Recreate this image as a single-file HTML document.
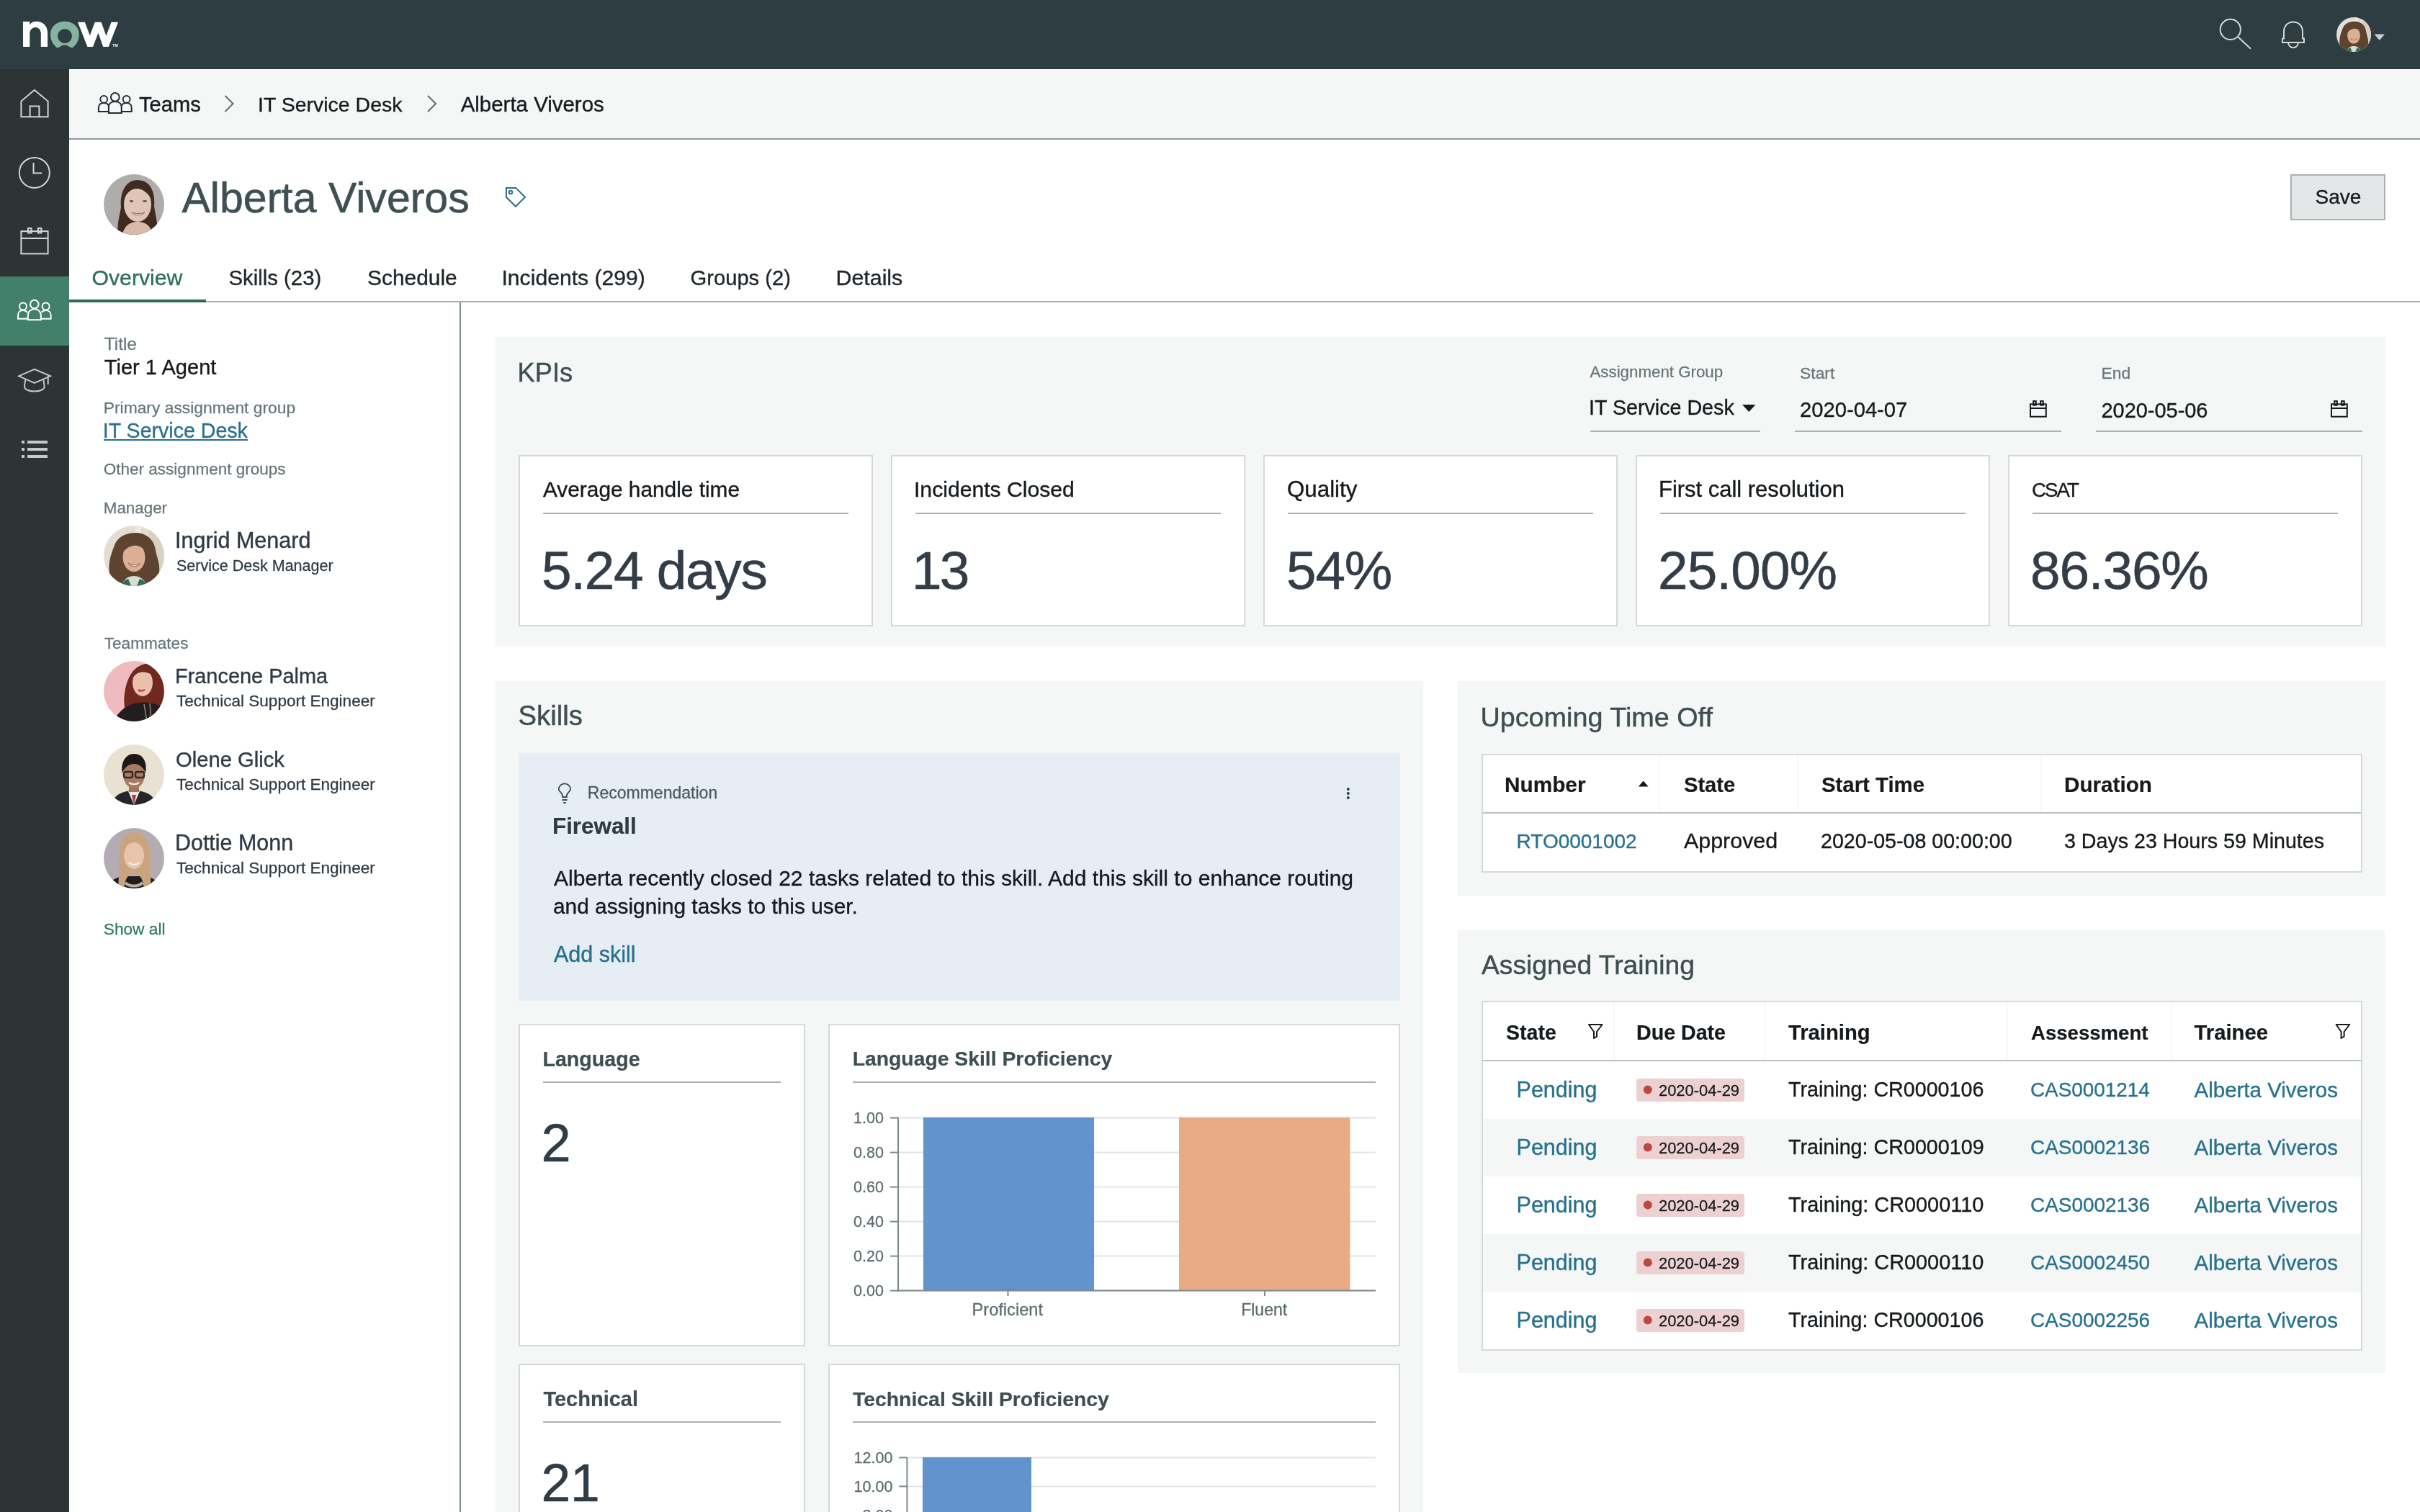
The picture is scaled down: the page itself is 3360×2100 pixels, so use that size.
<!DOCTYPE html><html><head><meta charset="utf-8"><title>Alberta Viveros</title><style>
html,body{margin:0;padding:0;width:3360px;height:2100px;overflow:hidden;background:#fff;position:relative;font-family:"Liberation Sans",sans-serif}
.t{position:absolute;white-space:nowrap;line-height:1;font-family:"Liberation Sans",sans-serif}
.r{position:absolute;box-sizing:border-box}
svg{position:absolute;overflow:visible}
#root{position:absolute;left:0;top:0;width:3360px;height:2100px;will-change:transform}
</style></head><body><div id="root"><div class="r" style="left:0px;top:0px;width:3360px;height:96px;background:#2e3d42;"></div>
<svg style="left:0;top:0" width="200" height="96" viewBox="0 0 200 96">
<path fill="#ffffff" d="M32,65 V30 H41.3 V34.2 C43.6,31.3 46.8,29.8 50.3,29.8 C59.8,29.8 66.1,36.2 66.1,46.2 V65 H56.8 V47 C56.8,41.6 53.9,37.9 49.3,37.9 C44.7,37.9 41.3,41.6 41.3,47 V65 Z"/>
<path fill="#86b3a0" fill-rule="evenodd" d="M70,47.8 C70,36.8 78.9,29.8 89.9,29.8 C100.9,29.8 109.8,36.8 109.8,47.8 C109.8,55.5 106.4,61.6 101.8,65.4 C100.3,66.6 98.6,66.5 97.2,65.5 C95.2,64 92.8,62.5 89.9,62.5 C87,62.5 84.6,64 82.6,65.5 C81.2,66.5 79.5,66.6 78,65.4 C73.4,61.6 70,55.5 70,47.8 Z M90,40.2 A9.9,9.9 0 1 0 90.01,40.2 Z"/>
<polygon fill="#ffffff" points="108,30.65 117.8,30.65 124.8,49.3 131.8,30.65 140.6,30.65 147.4,49.7 154.55,30.65 164.1,30.65 150.7,64.9 143.2,64.9 136.4,45.8 129.1,64.9 121.4,64.9"/>
<text x="156.3" y="65" font-family="Liberation Sans" font-weight="700" font-size="5.2" fill="#fff">TM</text>
</svg>
<svg style="left:3060px;top:10px" width="300" height="80" viewBox="3060 10 300 80">
<circle cx="3096.8" cy="40.9" r="14.1" fill="none" stroke="#d3d8d9" stroke-width="2"/>
<line x1="3107.5" y1="51.5" x2="3125" y2="67.8" stroke="#d3d8d9" stroke-width="2"/>
<path d="M3171,53.5 V44 C3171,35.5 3177,30.5 3184,30.5 C3191,30.5 3197,35.5 3197,44 V53.5 H3199 V59 H3169 V53.5 Z" fill="none" stroke="#d3d8d9" stroke-width="2"/>
<path d="M3177.2,59.5 A6.8,6.8 0 0 0 3190.8,59.5" fill="none" stroke="#d3d8d9" stroke-width="2"/>
<polygon points="3296.5,47.5 3311,47.5 3303.75,56" fill="#c9cfd0"/>
</svg>
<svg style="left:3244px;top:24px" width="48" height="48" viewBox="0 0 84 84"><defs><clipPath id="av324424"><circle cx="42" cy="42" r="42"/></clipPath></defs><g clip-path="url(#av324424)"><rect width="84" height="84" fill="#e4ded2"/>
<rect x="44" y="0" width="8" height="84" fill="#eeeae2"/><rect x="62" y="0" width="22" height="84" fill="#d9d2c3"/>
<path d="M8,66 C6,52 10,40 14,30 C18,16 30,10 44,10 C60,10 70,20 72,34 C74,46 80,56 76,70 C72,80 66,84 60,84 L20,84 C14,82 10,74 8,66 Z" fill="#5e4331"/>
<path d="M24,84 C28,74 34,70 42,70 C50,70 56,74 60,84 Z" fill="#d6ddd2"/>
<path d="M24,84 C26,78 30,75 34,74 L38,84 Z M60,84 C58,78 54,75 50,74 L46,84 Z" fill="#2f6a55"/>
<ellipse cx="42" cy="44" rx="15.5" ry="20" fill="#dcae94"/>
<path d="M26,38 C26,26 33,20 43,20 C53,20 59,26 59,36 C53,29 47,27 41,28 C35,29 29,33 26,38 Z" fill="#5e4331"/>
<path d="M34,52 C38,58 47,58 51,52 C47,55 38,55 34,52 Z" fill="#f6f0e8" stroke="#9a5a50" stroke-width="1"/></g></svg>
<div class="r" style="left:0px;top:96px;width:96px;height:2004px;background:#2d3436;"></div>
<div class="r" style="left:0px;top:384px;width:96px;height:96px;background:#42806c;"></div>
<svg style="left:0;top:96px" width="96" height="600" viewBox="0 96 96 600">
<g fill="none" stroke="#d2d6d6" stroke-width="2">
<path d="M29.4,162.3 V140.6 L47.8,125 L66.6,140.6 V162.3 Z"/>
<path d="M41.6,162.3 V147.6 H54.4 V162.3"/>
<circle cx="47.8" cy="239.9" r="21"/>
<path d="M46.5,226 V240.6 H58"/>
<rect x="29.4" y="321.2" width="37.2" height="31.2"/>
<line x1="29.4" y1="331" x2="66.6" y2="331"/>
<rect x="39" y="317" width="4.5" height="6.5"/>
<rect x="52.9" y="317" width="4.5" height="6.5"/>
</g>
<g fill="none" stroke="#ffffff" stroke-width="2">
<circle cx="47.8" cy="422.6" r="5.8"/>
<path d="M38.8,444.2 V438.5 C38.8,432.5 42.8,429.2 47.8,429.2 C52.8,429.2 56.8,432.5 56.8,438.5 V444.2 Z"/>
<circle cx="32" cy="425.6" r="5"/>
<path d="M38.8,442.8 H25 V437.5 C25,433.5 28,431 32,431 C34.5,431 36.8,432 38,434"/>
<circle cx="63.6" cy="425.6" r="5"/>
<path d="M56.8,442.8 H70.6 V437.5 C70.6,433.5 67.6,431 63.6,431 C61.1,431 58.8,432 57.6,434"/>
</g>
<g fill="none" stroke="#c4c9ca" stroke-width="2">
<polygon points="26,522.3 47.8,512.8 70,522.3 47.8,532"/>
<path d="M35.4,526.6 C35,530 34,534 34,537 C34,541 40,543.5 47.8,543.5 C55.6,543.5 61.6,541 61.6,537 C61.6,534 60.6,530 60.2,526.6"/>
<line x1="66.7" y1="522.5" x2="66.7" y2="534"/>
</g>
<g fill="#c4c9ca">
<rect x="30" y="612" width="4" height="4"/><rect x="38" y="612" width="28" height="4"/>
<rect x="30" y="622" width="4" height="4"/><rect x="38" y="622" width="28" height="4"/>
<rect x="30" y="632" width="4" height="4"/><rect x="38" y="632" width="28" height="4"/>
</g>
</svg>
<div class="r" style="left:96px;top:96px;width:3264px;height:96px;background:#f5f6f6;"></div>
<div class="r" style="left:96px;top:192px;width:3264px;height:2px;background:#8d9a9c;"></div>
<svg style="left:96px;top:96px" width="600" height="96" viewBox="96 96 600 96">
<g fill="none" stroke="#232c36" stroke-width="2">
<circle cx="159.8" cy="134.9" r="5.9"/>
<path d="M150.9,157.1 V148.8 C150.9,143.6 154.8,140.9 159.8,140.9 C164.8,140.9 168.7,143.6 168.7,148.8 V157.1 Z"/>
<circle cx="144.2" cy="137.9" r="4.9"/>
<path d="M150.9,155 H136.9 V149.5 C136.9,145.2 140.2,142.9 144.2,142.9 C147.6,142.9 150.2,144.6 150.9,147"/>
<circle cx="175.6" cy="137.9" r="4.9"/>
<path d="M168.7,155 H182.7 V149.5 C182.7,145.2 179.4,142.9 175.6,142.9 C172,142.9 169.4,144.6 168.7,147"/>
</g>
<g fill="none" stroke="#5f6d70" stroke-width="2">
<polyline points="312.5,133 323.5,144 312.5,155"/>
<polyline points="594,133 605,144 594,155"/>
</g>
</svg>
<span class="t" style="left:193.00px;top:130.91px;font-size:29.19px;font-weight:400;color:#161a1d;-webkit-text-stroke:0.35px #161a1d;">Teams</span>
<span class="t" style="left:358.00px;top:131.26px;font-size:28.49px;font-weight:400;color:#161a1d;-webkit-text-stroke:0.34px #161a1d;">IT Service Desk</span>
<span class="t" style="left:639.70px;top:130.27px;font-size:29.45px;font-weight:400;color:#161a1d;-webkit-text-stroke:0.35px #161a1d;">Alberta Viveros</span>
<svg style="left:144px;top:242px" width="84" height="84" viewBox="0 0 84 84"><defs><clipPath id="av144242"><circle cx="42" cy="42" r="42"/></clipPath></defs><g clip-path="url(#av144242)"><rect width="84" height="84" fill="#adaeab"/>
<path d="M20,84 C18,70 22,58 24,46 C22,26 30,8 47,8 C64,8 72,24 70,44 C72,58 76,70 74,84 Z" fill="#3f2b20"/>
<path d="M26,84 C28,72 36,66 47,66 C58,66 66,72 68,84 Z" fill="#d8bca9"/>
<ellipse cx="47" cy="42" rx="19" ry="24" fill="#dfc5b6"/>
<path d="M28,34 C30,20 38,14 48,14 C58,14 66,22 66,34 C60,24 52,20 46,20 C38,20 32,26 28,34 Z" fill="#3f2b20"/>
<ellipse cx="38.5" cy="37.5" rx="3" ry="1.4" fill="#6b5550"/><ellipse cx="57" cy="37.5" rx="3" ry="1.4" fill="#6b5550"/>
<path d="M39,53 C43,58 53,58 57,53 C52,55 44,55 39,53 Z" fill="#f3ece6" stroke="#8d5d55" stroke-width="1"/></g></svg>
<span class="t" style="left:252.50px;top:246.48px;font-size:59.04px;font-weight:400;color:#3f5053;-webkit-text-stroke:0.6px #3f5053;">Alberta Viveros</span>
<svg style="left:690px;top:250px" width="50" height="45" viewBox="690 250 50 45">
<g fill="none" stroke="#2b6f86" stroke-width="2"><polygon points="702.9,260.9 716.2,260.9 729,273.8 716,286.8 702.9,273.8"/>
<circle cx="709" cy="267" r="2.3"/></g></svg>
<div class="r" style="left:3180px;top:242px;width:132px;height:64px;background:#e4e6e8;border:2px solid #a9b1b4;"></div>
<span class="t" style="left:3214.50px;top:260.47px;font-size:28.05px;font-weight:400;color:#161a1d;-webkit-text-stroke:0.34px #161a1d;">Save</span>
<div class="r" style="left:96px;top:418px;width:3264px;height:2px;background:#a9afb2;"></div>
<div class="r" style="left:96px;top:416px;width:190px;height:4px;background:#2e6b57;"></div>
<span class="t" style="left:127.50px;top:370.89px;font-size:30.23px;font-weight:400;color:#2d6f58;-webkit-text-stroke:0.36px #2d6f58;">Overview</span>
<span class="t" style="left:317.50px;top:371.34px;font-size:29.33px;font-weight:400;color:#1f2528;-webkit-text-stroke:0.35px #1f2528;">Skills (23)</span>
<span class="t" style="left:510.00px;top:371.04px;font-size:29.92px;font-weight:400;color:#1f2528;-webkit-text-stroke:0.36px #1f2528;">Schedule</span>
<span class="t" style="left:696.50px;top:370.93px;font-size:30.13px;font-weight:400;color:#1f2528;-webkit-text-stroke:0.36px #1f2528;">Incidents (299)</span>
<span class="t" style="left:958.50px;top:371.91px;font-size:29.19px;font-weight:400;color:#1f2528;-webkit-text-stroke:0.35px #1f2528;">Groups (2)</span>
<span class="t" style="left:1160.50px;top:370.81px;font-size:30.37px;font-weight:400;color:#1f2528;-webkit-text-stroke:0.36px #1f2528;">Details</span>
<div class="r" style="left:638px;top:420px;width:2px;height:1680px;background:#808b8d;"></div>
<span class="t" style="left:144.75px;top:465.57px;font-size:24.36px;font-weight:400;color:#677679;-webkit-text-stroke:0.29px #677679;">Title</span>
<span class="t" style="left:144.75px;top:495.97px;font-size:29.07px;font-weight:400;color:#161a1d;-webkit-text-stroke:0.35px #161a1d;">Tier 1 Agent</span>
<span class="t" style="left:143.75px;top:554.84px;font-size:22.83px;font-weight:400;color:#677679;-webkit-text-stroke:0.27px #677679;">Primary assignment group</span>
<span class="t" style="left:142.75px;top:583.70px;font-size:28.59px;font-weight:400;color:#27718e;-webkit-text-stroke:0.34px #27718e;">IT Service Desk</span>
<div class="r" style="left:144px;top:610px;width:200px;height:2px;background:#27718e;"></div>
<span class="t" style="left:143.75px;top:641.24px;font-size:22.52px;font-weight:400;color:#677679;-webkit-text-stroke:0.27px #677679;">Other assignment groups</span>
<span class="t" style="left:143.75px;top:695.31px;font-size:22.38px;font-weight:400;color:#677679;-webkit-text-stroke:0.27px #677679;">Manager</span>
<svg style="left:144px;top:730px" width="84" height="84" viewBox="0 0 84 84"><defs><clipPath id="av144730"><circle cx="42" cy="42" r="42"/></clipPath></defs><g clip-path="url(#av144730)"><rect width="84" height="84" fill="#e4ded2"/>
<rect x="44" y="0" width="8" height="84" fill="#eeeae2"/><rect x="62" y="0" width="22" height="84" fill="#d9d2c3"/>
<path d="M8,66 C6,52 10,40 14,30 C18,16 30,10 44,10 C60,10 70,20 72,34 C74,46 80,56 76,70 C72,80 66,84 60,84 L20,84 C14,82 10,74 8,66 Z" fill="#5e4331"/>
<path d="M24,84 C28,74 34,70 42,70 C50,70 56,74 60,84 Z" fill="#d6ddd2"/>
<path d="M24,84 C26,78 30,75 34,74 L38,84 Z M60,84 C58,78 54,75 50,74 L46,84 Z" fill="#2f6a55"/>
<ellipse cx="42" cy="44" rx="15.5" ry="20" fill="#dcae94"/>
<path d="M26,38 C26,26 33,20 43,20 C53,20 59,26 59,36 C53,29 47,27 41,28 C35,29 29,33 26,38 Z" fill="#5e4331"/>
<path d="M34,52 C38,58 47,58 51,52 C47,55 38,55 34,52 Z" fill="#f6f0e8" stroke="#9a5a50" stroke-width="1"/></g></svg>
<span class="t" style="left:243.00px;top:734.73px;font-size:30.55px;font-weight:400;color:#2e3943;-webkit-text-stroke:0.37px #2e3943;">Ingrid Menard</span>
<span class="t" style="left:245.00px;top:775.99px;font-size:21.52px;font-weight:400;color:#2e3943;-webkit-text-stroke:0.26px #2e3943;">Service Desk Manager</span>
<span class="t" style="left:144.75px;top:883.41px;font-size:22.58px;font-weight:400;color:#677679;-webkit-text-stroke:0.27px #677679;">Teammates</span>
<svg style="left:144px;top:918px" width="84" height="84" viewBox="0 0 84 84"><defs><clipPath id="av144918"><circle cx="42" cy="42" r="42"/></clipPath></defs><g clip-path="url(#av144918)"><rect width="84" height="84" fill="#efbbbe"/>
<path d="M30,70 C26,52 30,30 38,18 C44,8 56,2 68,4 C80,8 84,24 84,44 L84,84 L28,84 Z" fill="#70291f"/>
<path d="M14,84 C20,70 32,60 48,58 C62,56 76,60 84,66 L84,84 Z" fill="#221e1f"/>
<path d="M56,60 L60,84 M64,59 L66,84" stroke="#8d8a88" stroke-width="1.5"/>
<ellipse cx="54" cy="30" rx="14" ry="19" fill="#e8c0ac"/>
<path d="M40,24 C42,12 50,8 58,8 C66,8 70,14 70,22 C64,16 56,14 50,16 C46,17 42,20 40,24 Z" fill="#70291f"/>
<path d="M48,40 C50,42 54,42 57,40" stroke="#c23b55" stroke-width="2.5" fill="none"/></g></svg>
<span class="t" style="left:243.00px;top:925.24px;font-size:28.92px;font-weight:400;color:#2e3943;-webkit-text-stroke:0.35px #2e3943;">Francene Palma</span>
<span class="t" style="left:245.00px;top:962.73px;font-size:22.55px;font-weight:400;color:#2e3943;-webkit-text-stroke:0.27px #2e3943;">Technical Support Engineer</span>
<svg style="left:144px;top:1034px" width="84" height="84" viewBox="0 0 84 84"><defs><clipPath id="av1441034"><circle cx="42" cy="42" r="42"/></clipPath></defs><g clip-path="url(#av1441034)"><rect width="84" height="84" fill="#e9e1d1"/>
<path d="M10,84 C14,70 26,64 42,64 C58,64 70,70 74,84 Z" fill="#24262c"/>
<path d="M34,65 L42,84 L50,65 Z" fill="#ebe6df"/>
<path d="M39,70 L42,84 L45,70 Z" fill="#b83a3a"/>
<rect x="35" y="54" width="14" height="12" fill="#a07458"/>
<ellipse cx="42" cy="42" rx="15" ry="19" fill="#a97b60"/>
<path d="M26,40 C23,26 30,13 42,13 C55,13 61,25 58,40 C55,31 49,27 42,27 C35,27 29,31 26,40 Z" fill="#1d1816"/>
<g fill="none" stroke="#2a2a30" stroke-width="2.4"><rect x="28" y="38" width="12" height="8" rx="2.5"/><rect x="44" y="38" width="12" height="8" rx="2.5"/></g>
<path d="M35,53 C39,56 45,56 49,53" stroke="#f4f0ea" stroke-width="2.2" fill="none"/></g></svg>
<span class="t" style="left:244.00px;top:1041.10px;font-size:29.19px;font-weight:400;color:#2e3943;-webkit-text-stroke:0.35px #2e3943;">Olene Glick</span>
<span class="t" style="left:245.00px;top:1078.73px;font-size:22.55px;font-weight:400;color:#2e3943;-webkit-text-stroke:0.27px #2e3943;">Technical Support Engineer</span>
<svg style="left:144px;top:1150px" width="84" height="84" viewBox="0 0 84 84"><defs><clipPath id="av1441150"><circle cx="42" cy="42" r="42"/></clipPath></defs><g clip-path="url(#av1441150)"><rect width="84" height="84" fill="#b3adb3"/>
<path d="M6,84 C8,72 18,68 28,67 L56,67 C66,68 76,72 78,84 Z" fill="#1f1c1e"/>
<path d="M20,84 C22,62 20,46 22,32 C24,14 32,6 42,6 C54,6 62,14 64,32 C66,46 64,62 66,84 L56,84 C54,72 52,64 42,64 C32,64 30,72 28,84 Z" fill="#c9a47f"/>
<ellipse cx="42" cy="38" rx="14" ry="19" fill="#e7c4ac"/>
<path d="M28,32 C28,18 35,12 42,12 C51,12 57,18 57,30 C51,22 46,20 42,20 C36,20 31,24 28,32 Z" fill="#c9a47f"/>
<path d="M35,48 C39,52 45,52 49,48" stroke="#f5f0eb" stroke-width="2.2" fill="none"/>
<path d="M30,76 C36,82 48,82 54,76" stroke="#b9aea7" stroke-width="4" fill="none"/></g></svg>
<span class="t" style="left:243.00px;top:1155.48px;font-size:30.44px;font-weight:400;color:#2e3943;-webkit-text-stroke:0.37px #2e3943;">Dottie Monn</span>
<span class="t" style="left:245.00px;top:1194.73px;font-size:22.55px;font-weight:400;color:#2e3943;-webkit-text-stroke:0.27px #2e3943;">Technical Support Engineer</span>
<span class="t" style="left:143.75px;top:1278.65px;font-size:22.70px;font-weight:400;color:#307a67;-webkit-text-stroke:0.27px #307a67;">Show all</span>
<div class="r" style="left:688px;top:468px;width:2624px;height:430px;background:#f5f7f6;"></div>
<span class="t" style="left:718.60px;top:499.69px;font-size:36.22px;font-weight:400;color:#3e4e51;-webkit-text-stroke:0.43px #3e4e51;">KPIs</span>
<span class="t" style="left:2207.50px;top:506.34px;font-size:22.31px;font-weight:400;color:#677679;-webkit-text-stroke:0.27px #677679;">Assignment Group</span>
<span class="t" style="left:2499.00px;top:507.05px;font-size:22.90px;font-weight:400;color:#677679;-webkit-text-stroke:0.27px #677679;">Start</span>
<span class="t" style="left:2917.50px;top:507.09px;font-size:22.82px;font-weight:400;color:#677679;-webkit-text-stroke:0.27px #677679;">End</span>
<span class="t" style="left:2206.00px;top:552.17px;font-size:28.67px;font-weight:400;color:#161a1d;-webkit-text-stroke:0.34px #161a1d;">IT Service Desk</span>
<span class="t" style="left:2499.00px;top:555.41px;font-size:29.19px;font-weight:400;color:#161a1d;-webkit-text-stroke:0.35px #161a1d;">2020-04-07</span>
<span class="t" style="left:2917.50px;top:555.53px;font-size:28.93px;font-weight:400;color:#161a1d;-webkit-text-stroke:0.35px #161a1d;">2020-05-06</span>
<div class="r" style="left:2208px;top:598px;width:236px;height:2px;background:#aab2b5;"></div>
<div class="r" style="left:2492px;top:598px;width:370px;height:2px;background:#aab2b5;"></div>
<div class="r" style="left:2910px;top:598px;width:370px;height:2px;background:#aab2b5;"></div>
<svg style="left:2400px;top:540px" width="900" height="60" viewBox="2400 540 900 60">
<polygon points="2419,562 2437.5,562 2428.25,572" fill="#161a1d"/>
<g fill="none" stroke="#161a1d" stroke-width="2">
<rect x="2819" y="561.3" width="21.8" height="17.4"/><line x1="2819" y1="567" x2="2840.8" y2="567"/>
<rect x="2823.2" y="557.1" width="3.6" height="5.6"/><rect x="2833.1" y="557.1" width="3.6" height="5.6"/>
<rect x="3237" y="561.3" width="21.8" height="17.4"/><line x1="3237" y1="567" x2="3258.8" y2="567"/>
<rect x="3241.2" y="557.1" width="3.6" height="5.6"/><rect x="3251.1" y="557.1" width="3.6" height="5.6"/>
</g></svg>
<div class="r" style="left:720px;top:632px;width:492px;height:238px;background:#ffffff;border:2px solid #d5d9da;"></div>
<span class="t" style="left:754.00px;top:665.18px;font-size:29.83px;font-weight:400;color:#161a1d;-webkit-text-stroke:0.36px #161a1d;">Average handle time</span>
<div class="r" style="left:754px;top:712px;width:424px;height:2px;background:#aab1b4;"></div>
<span class="t" style="left:752.00px;top:755.44px;font-size:74.72px;font-weight:400;color:#343d47;-webkit-text-stroke:0.6px #343d47;letter-spacing:-1.282px;">5.24 days</span>
<div class="r" style="left:1237px;top:632px;width:492px;height:238px;background:#ffffff;border:2px solid #d5d9da;"></div>
<span class="t" style="left:1269.00px;top:665.02px;font-size:30.15px;font-weight:400;color:#161a1d;-webkit-text-stroke:0.36px #161a1d;">Incidents Closed</span>
<div class="r" style="left:1271px;top:712px;width:424px;height:2px;background:#aab1b4;"></div>
<span class="t" style="left:1266.00px;top:755.44px;font-size:74.72px;font-weight:400;color:#343d47;-webkit-text-stroke:0.6px #343d47;letter-spacing:-2.755px;">13</span>
<div class="r" style="left:1754px;top:632px;width:492px;height:238px;background:#ffffff;border:2px solid #d5d9da;"></div>
<span class="t" style="left:1787.00px;top:664.44px;font-size:31.31px;font-weight:400;color:#161a1d;-webkit-text-stroke:0.38px #161a1d;">Quality</span>
<div class="r" style="left:1788px;top:712px;width:424px;height:2px;background:#aab1b4;"></div>
<span class="t" style="left:1786.00px;top:755.44px;font-size:74.72px;font-weight:400;color:#343d47;-webkit-text-stroke:0.6px #343d47;letter-spacing:-1.155px;">54%</span>
<div class="r" style="left:2271px;top:632px;width:492px;height:238px;background:#ffffff;border:2px solid #d5d9da;"></div>
<span class="t" style="left:2303.00px;top:664.63px;font-size:30.94px;font-weight:400;color:#161a1d;-webkit-text-stroke:0.37px #161a1d;">First call resolution</span>
<div class="r" style="left:2305px;top:712px;width:424px;height:2px;background:#aab1b4;"></div>
<span class="t" style="left:2302.00px;top:755.44px;font-size:74.72px;font-weight:400;color:#343d47;-webkit-text-stroke:0.6px #343d47;letter-spacing:-0.876px;">25.00%</span>
<div class="r" style="left:2788px;top:632px;width:492px;height:238px;background:#ffffff;border:2px solid #d5d9da;"></div>
<span class="t" style="left:2821.00px;top:667.27px;font-size:27.65px;font-weight:400;color:#161a1d;-webkit-text-stroke:0.33px #161a1d;letter-spacing:-1.927px;">CSAT</span>
<div class="r" style="left:2822px;top:712px;width:424px;height:2px;background:#aab1b4;"></div>
<span class="t" style="left:2819.00px;top:755.44px;font-size:74.72px;font-weight:400;color:#343d47;-webkit-text-stroke:0.6px #343d47;letter-spacing:-1.136px;">86.36%</span>
<div class="r" style="left:688px;top:946px;width:1288px;height:1154px;background:#f5f7f6;"></div>
<span class="t" style="left:719.60px;top:975.39px;font-size:38.22px;font-weight:400;color:#3e4e51;-webkit-text-stroke:0.46px #3e4e51;">Skills</span>
<div class="r" style="left:720px;top:1046px;width:1224px;height:344px;background:#e6edf4;"></div>
<svg style="left:760px;top:1080px" width="1200" height="50" viewBox="760 1080 1200 50">
<path d="M781,1107 V1105.5 C781,1103.2 779.8,1101.8 778.2,1100.2 C776.6,1098.6 775.8,1097.2 775.8,1096.4 A8.1,8.1 0 0 1 792,1096.4 C792,1097.2 791.2,1098.6 789.6,1100.2 C788,1101.8 786.8,1103.2 786.8,1105.5 V1107 Z" fill="none" stroke="#3b4a4c" stroke-width="1.8"/>
<rect x="780.5" y="1110" width="7" height="2" fill="#3b4a4c"/>
<rect x="782.3" y="1114" width="3.5" height="2" fill="#3b4a4c"/>
<circle cx="1871.8" cy="1096" r="2" fill="#2f3a44"/><circle cx="1871.8" cy="1102" r="2" fill="#2f3a44"/><circle cx="1871.8" cy="1108" r="2" fill="#2f3a44"/>
</svg>
<span class="t" style="left:815.80px;top:1090.49px;font-size:23.02px;font-weight:400;color:#4b5a5d;-webkit-text-stroke:0.28px #4b5a5d;">Recommendation</span>
<span class="t" style="left:767.00px;top:1132.42px;font-size:31.37px;font-weight:700;color:#2f3a44;-webkit-text-stroke:0.2px #2f3a44;">Firewall</span>
<span class="t" style="left:769.00px;top:1205.08px;font-size:30.04px;font-weight:400;color:#161a1d;-webkit-text-stroke:0.36px #161a1d;">Alberta recently closed 22 tasks related to this skill. Add this skill to enhance routing</span>
<span class="t" style="left:768.00px;top:1244.39px;font-size:29.83px;font-weight:400;color:#161a1d;-webkit-text-stroke:0.36px #161a1d;">and assigning tasks to this user.</span>
<span class="t" style="left:769.00px;top:1309.75px;font-size:30.51px;font-weight:400;color:#27718e;-webkit-text-stroke:0.37px #27718e;">Add skill</span>
<div class="r" style="left:720px;top:1422px;width:398px;height:448px;background:#ffffff;border:2px solid #d5d9da;"></div>
<span class="t" style="left:753.40px;top:1456.68px;font-size:28.64px;font-weight:700;color:#3e4e51;-webkit-text-stroke:0.2px #3e4e51;">Language</span>
<div class="r" style="left:754px;top:1501.5px;width:330px;height:2.0px;background:#a9b1b4;"></div>
<span class="t" style="left:751.40px;top:1551.29px;font-size:74.02px;font-weight:400;color:#303c47;-webkit-text-stroke:0.6px #303c47;letter-spacing:1.700px;">2</span>
<div class="r" style="left:720px;top:1894px;width:398px;height:246px;background:#ffffff;border:2px solid #d5d9da;"></div>
<span class="t" style="left:754.40px;top:1928.50px;font-size:29.01px;font-weight:700;color:#3e4e51;-webkit-text-stroke:0.2px #3e4e51;">Technical</span>
<div class="r" style="left:754px;top:1973.5px;width:330px;height:2.0px;background:#a9b1b4;"></div>
<span class="t" style="left:751.40px;top:2024.21px;font-size:73.18px;font-weight:400;color:#303c47;-webkit-text-stroke:0.6px #303c47;letter-spacing:0.005px;">21</span>
<div class="r" style="left:1150px;top:1422px;width:794px;height:448px;background:#ffffff;border:2px solid #d5d9da;"></div>
<span class="t" style="left:1183.70px;top:1455.63px;font-size:28.33px;font-weight:700;color:#3e4e51;-webkit-text-stroke:0.2px #3e4e51;">Language Skill Proficiency</span>
<div class="r" style="left:1184px;top:1501.5px;width:726px;height:2.0px;background:#a9b1b4;"></div>
<div class="r" style="left:1150px;top:1894px;width:794px;height:246px;background:#ffffff;border:2px solid #d5d9da;"></div>
<span class="t" style="left:1184.00px;top:1928.51px;font-size:28.38px;font-weight:700;color:#3e4e51;-webkit-text-stroke:0.2px #3e4e51;">Technical Skill Proficiency</span>
<div class="r" style="left:1184px;top:1973.5px;width:726px;height:2.0px;background:#a9b1b4;"></div>
<svg style="left:1150px;top:1500px" width="800" height="400" viewBox="1150 1500 800 400"><line x1="1247" y1="1552.6" x2="1910" y2="1552.6" stroke="#e1e4e5" stroke-width="2"/><line x1="1236" y1="1552.6" x2="1247" y2="1552.6" stroke="#7d8a8d" stroke-width="2"/><line x1="1247" y1="1600.6" x2="1910" y2="1600.6" stroke="#e1e4e5" stroke-width="2"/><line x1="1236" y1="1600.6" x2="1247" y2="1600.6" stroke="#7d8a8d" stroke-width="2"/><line x1="1247" y1="1648.6" x2="1910" y2="1648.6" stroke="#e1e4e5" stroke-width="2"/><line x1="1236" y1="1648.6" x2="1247" y2="1648.6" stroke="#7d8a8d" stroke-width="2"/><line x1="1247" y1="1696.6" x2="1910" y2="1696.6" stroke="#e1e4e5" stroke-width="2"/><line x1="1236" y1="1696.6" x2="1247" y2="1696.6" stroke="#7d8a8d" stroke-width="2"/><line x1="1247" y1="1744.6" x2="1910" y2="1744.6" stroke="#e1e4e5" stroke-width="2"/><line x1="1236" y1="1744.6" x2="1247" y2="1744.6" stroke="#7d8a8d" stroke-width="2"/><line x1="1247" y1="1792.6" x2="1910" y2="1792.6" stroke="#e1e4e5" stroke-width="2"/><line x1="1236" y1="1792.6" x2="1247" y2="1792.6" stroke="#7d8a8d" stroke-width="2"/><rect x="1282" y="1552" width="237" height="241" fill="#6194cc"/><rect x="1637" y="1552" width="237.4" height="241" fill="#e8ab84"/><line x1="1247" y1="1552" x2="1247" y2="1793.6" stroke="#7d8a8d" stroke-width="2"/><line x1="1246" y1="1792.6" x2="1910" y2="1792.6" stroke="#7d8a8d" stroke-width="2"/><line x1="1399.5" y1="1792.6" x2="1399.5" y2="1800" stroke="#7d8a8d" stroke-width="2"/><line x1="1756" y1="1792.6" x2="1756" y2="1800" stroke="#7d8a8d" stroke-width="2"/></svg>
<span class="t" style="left:1185.11px;top:1543.05px;font-size:21.50px;font-weight:400;color:#5c6b6e;-webkit-text-stroke:0.26px #5c6b6e;">1.00</span>
<span class="t" style="left:1185.11px;top:1591.05px;font-size:21.50px;font-weight:400;color:#5c6b6e;-webkit-text-stroke:0.26px #5c6b6e;">0.80</span>
<span class="t" style="left:1185.11px;top:1639.05px;font-size:21.50px;font-weight:400;color:#5c6b6e;-webkit-text-stroke:0.26px #5c6b6e;">0.60</span>
<span class="t" style="left:1185.11px;top:1687.05px;font-size:21.50px;font-weight:400;color:#5c6b6e;-webkit-text-stroke:0.26px #5c6b6e;">0.40</span>
<span class="t" style="left:1185.11px;top:1735.05px;font-size:21.50px;font-weight:400;color:#5c6b6e;-webkit-text-stroke:0.26px #5c6b6e;">0.20</span>
<span class="t" style="left:1185.11px;top:1783.05px;font-size:21.50px;font-weight:400;color:#5c6b6e;-webkit-text-stroke:0.26px #5c6b6e;">0.00</span>
<span class="t" style="left:1349.54px;top:1807.88px;font-size:23.64px;font-weight:400;color:#5c6b6e;-webkit-text-stroke:0.28px #5c6b6e;">Proficient</span>
<span class="t" style="left:1723.17px;top:1808.17px;font-size:23.06px;font-weight:400;color:#5c6b6e;-webkit-text-stroke:0.28px #5c6b6e;">Fluent</span>
<svg style="left:1150px;top:2000px" width="800" height="100" viewBox="1150 2000 800 100"><line x1="1259.4" y1="2024.4" x2="1910" y2="2024.4" stroke="#e1e4e5" stroke-width="2"/><line x1="1248" y1="2024.4" x2="1259.4" y2="2024.4" stroke="#7d8a8d" stroke-width="2"/><line x1="1259.4" y1="2064.4" x2="1910" y2="2064.4" stroke="#e1e4e5" stroke-width="2"/><line x1="1248" y1="2064.4" x2="1259.4" y2="2064.4" stroke="#7d8a8d" stroke-width="2"/><line x1="1259.4" y1="2104.4" x2="1910" y2="2104.4" stroke="#e1e4e5" stroke-width="2"/><line x1="1248" y1="2104.4" x2="1259.4" y2="2104.4" stroke="#7d8a8d" stroke-width="2"/><rect x="1281" y="2024" width="151" height="120" fill="#6194cc"/><line x1="1259.4" y1="2024" x2="1259.4" y2="2140" stroke="#7d8a8d" stroke-width="2"/></svg>
<span class="t" style="left:1185.55px;top:2014.85px;font-size:21.50px;font-weight:400;color:#5c6b6e;-webkit-text-stroke:0.26px #5c6b6e;">12.00</span>
<span class="t" style="left:1185.55px;top:2054.85px;font-size:21.50px;font-weight:400;color:#5c6b6e;-webkit-text-stroke:0.26px #5c6b6e;">10.00</span>
<span class="t" style="left:1197.51px;top:2094.85px;font-size:21.50px;font-weight:400;color:#5c6b6e;-webkit-text-stroke:0.26px #5c6b6e;">8.00</span>
<div class="r" style="left:2024px;top:946px;width:1288px;height:298px;background:#f5f7f6;"></div>
<span class="t" style="left:2055.40px;top:977.91px;font-size:37.78px;font-weight:400;color:#3e4e51;-webkit-text-stroke:0.45px #3e4e51;">Upcoming Time Off</span>
<div class="r" style="left:2057px;top:1047px;width:1223px;height:165px;background:#ffffff;border:2px solid #d5d9da;"></div>
<div class="r" style="left:2059px;top:1127.5px;width:1219px;height:2.0px;background:#b9c0c2;"></div>
<div class="r" style="left:2303px;top:1049px;width:2px;height:78px;background:#f7f8f8;"></div>
<div class="r" style="left:2495px;top:1049px;width:2px;height:78px;background:#f7f8f8;"></div>
<div class="r" style="left:2833px;top:1049px;width:2px;height:78px;background:#f7f8f8;"></div>
<span class="t" style="left:2089.00px;top:1074.80px;font-size:29.79px;font-weight:700;color:#161a1d;-webkit-text-stroke:0.2px #161a1d;">Number</span>
<span class="t" style="left:2338.00px;top:1075.65px;font-size:29.09px;font-weight:700;color:#161a1d;-webkit-text-stroke:0.2px #161a1d;">State</span>
<span class="t" style="left:2529.00px;top:1075.02px;font-size:29.36px;font-weight:700;color:#161a1d;-webkit-text-stroke:0.2px #161a1d;">Start Time</span>
<span class="t" style="left:2866.00px;top:1074.88px;font-size:29.65px;font-weight:700;color:#161a1d;-webkit-text-stroke:0.2px #161a1d;">Duration</span>
<svg style="left:2270px;top:1080px" width="30" height="20" viewBox="2270 1080 30 20"><polygon points="2274.8,1092.5 2288.6,1092.5 2281.7,1084.5" fill="#161a1d"/></svg>
<span class="t" style="left:2105.60px;top:1154.81px;font-size:27.99px;font-weight:400;color:#27718e;-webkit-text-stroke:0.34px #27718e;">RTO0001002</span>
<span class="t" style="left:2338.00px;top:1152.09px;font-size:30.42px;font-weight:400;color:#161a1d;-webkit-text-stroke:0.37px #161a1d;">Approved</span>
<span class="t" style="left:2528.00px;top:1153.99px;font-size:28.62px;font-weight:400;color:#161a1d;-webkit-text-stroke:0.34px #161a1d;">2020-05-08 00:00:00</span>
<span class="t" style="left:2866.00px;top:1153.99px;font-size:28.61px;font-weight:400;color:#161a1d;-webkit-text-stroke:0.34px #161a1d;">3 Days 23 Hours 59 Minutes</span>
<div class="r" style="left:2024px;top:1292px;width:1288px;height:615px;background:#f5f7f6;"></div>
<span class="t" style="left:2057.00px;top:1322.39px;font-size:37.23px;font-weight:400;color:#3e4e51;-webkit-text-stroke:0.45px #3e4e51;">Assigned Training</span>
<div class="r" style="left:2057px;top:1390px;width:1223px;height:486px;background:#ffffff;border:2px solid #d5d9da;"></div>
<div class="r" style="left:2059px;top:1554px;width:1219px;height:80px;background:#f5f7f6;"></div>
<div class="r" style="left:2059px;top:1714px;width:1219px;height:80px;background:#f5f7f6;"></div>
<div class="r" style="left:2059px;top:1472px;width:1219px;height:2px;background:#b9c0c2;"></div>
<div class="r" style="left:2240px;top:1392px;width:2px;height:80px;background:#f7f8f8;"></div>
<div class="r" style="left:2449px;top:1392px;width:2px;height:80px;background:#f7f8f8;"></div>
<div class="r" style="left:2786px;top:1392px;width:2px;height:80px;background:#f7f8f8;"></div>
<div class="r" style="left:3014px;top:1392px;width:2px;height:80px;background:#f7f8f8;"></div>
<span class="t" style="left:2091.00px;top:1420.30px;font-size:28.59px;font-weight:700;color:#161a1d;-webkit-text-stroke:0.2px #161a1d;">State</span>
<span class="t" style="left:2272.00px;top:1420.29px;font-size:28.62px;font-weight:700;color:#161a1d;-webkit-text-stroke:0.2px #161a1d;">Due Date</span>
<span class="t" style="left:2483.00px;top:1419.99px;font-size:29.23px;font-weight:700;color:#161a1d;-webkit-text-stroke:0.2px #161a1d;">Training</span>
<span class="t" style="left:2820.00px;top:1421.32px;font-size:27.57px;font-weight:700;color:#161a1d;-webkit-text-stroke:0.2px #161a1d;">Assessment</span>
<span class="t" style="left:3046.50px;top:1419.46px;font-size:29.29px;font-weight:700;color:#161a1d;-webkit-text-stroke:0.2px #161a1d;">Trainee</span>
<svg style="left:2190px;top:1410px" width="1100" height="40" viewBox="2190 1410 1100 40">
<g fill="none" stroke="#161a1d" stroke-width="2" stroke-linejoin="round">
<path d="M2206,1423 H2224.6 L2217,1433 V1439.5 L2213,1442 V1433 Z"/>
<path d="M3243.6,1423 H3262.2 L3254.6,1433 V1439.5 L3250.6,1442 V1433 Z"/>
</g></svg>
<span class="t" style="left:2105.60px;top:1497.56px;font-size:30.48px;font-weight:400;color:#27718e;-webkit-text-stroke:0.37px #27718e;">Pending</span>
<div class="r" style="left:2272px;top:1497.6px;width:150px;height:32.0px;background:#edd0d2;border-radius:4px;"></div>
<span class="t" style="left:2303.00px;top:1504.14px;font-size:21.92px;font-weight:400;color:#161a1d;-webkit-text-stroke:0.26px #161a1d;">2020-04-29</span>
<span class="t" style="left:2483.00px;top:1499.47px;font-size:28.66px;font-weight:400;color:#161a1d;-webkit-text-stroke:0.34px #161a1d;">Training: CR0000106</span>
<span class="t" style="left:2819.00px;top:1500.36px;font-size:27.87px;font-weight:400;color:#27718e;-webkit-text-stroke:0.33px #27718e;">CAS0001214</span>
<span class="t" style="left:3046.50px;top:1498.55px;font-size:29.50px;font-weight:400;color:#27718e;-webkit-text-stroke:0.35px #27718e;">Alberta Viveros</span>
<span class="t" style="left:2105.60px;top:1577.56px;font-size:30.48px;font-weight:400;color:#27718e;-webkit-text-stroke:0.37px #27718e;">Pending</span>
<div class="r" style="left:2272px;top:1577.6px;width:150px;height:32.0px;background:#edd0d2;border-radius:4px;"></div>
<span class="t" style="left:2303.00px;top:1584.14px;font-size:21.92px;font-weight:400;color:#161a1d;-webkit-text-stroke:0.26px #161a1d;">2020-04-29</span>
<span class="t" style="left:2483.00px;top:1579.45px;font-size:28.69px;font-weight:400;color:#161a1d;-webkit-text-stroke:0.34px #161a1d;">Training: CR0000109</span>
<span class="t" style="left:2819.00px;top:1580.34px;font-size:27.92px;font-weight:400;color:#27718e;-webkit-text-stroke:0.34px #27718e;">CAS0002136</span>
<span class="t" style="left:3046.50px;top:1578.55px;font-size:29.50px;font-weight:400;color:#27718e;-webkit-text-stroke:0.35px #27718e;">Alberta Viveros</span>
<span class="t" style="left:2105.60px;top:1657.56px;font-size:30.48px;font-weight:400;color:#27718e;-webkit-text-stroke:0.37px #27718e;">Pending</span>
<div class="r" style="left:2272px;top:1657.6px;width:150px;height:32.0px;background:#edd0d2;border-radius:4px;"></div>
<span class="t" style="left:2303.00px;top:1664.14px;font-size:21.92px;font-weight:400;color:#161a1d;-webkit-text-stroke:0.26px #161a1d;">2020-04-29</span>
<span class="t" style="left:2483.00px;top:1659.35px;font-size:28.89px;font-weight:400;color:#161a1d;-webkit-text-stroke:0.35px #161a1d;">Training: CR0000110</span>
<span class="t" style="left:2819.00px;top:1660.34px;font-size:27.92px;font-weight:400;color:#27718e;-webkit-text-stroke:0.34px #27718e;">CAS0002136</span>
<span class="t" style="left:3046.50px;top:1658.55px;font-size:29.50px;font-weight:400;color:#27718e;-webkit-text-stroke:0.35px #27718e;">Alberta Viveros</span>
<span class="t" style="left:2105.60px;top:1737.56px;font-size:30.48px;font-weight:400;color:#27718e;-webkit-text-stroke:0.37px #27718e;">Pending</span>
<div class="r" style="left:2272px;top:1737.6px;width:150px;height:32.0px;background:#edd0d2;border-radius:4px;"></div>
<span class="t" style="left:2303.00px;top:1744.14px;font-size:21.92px;font-weight:400;color:#161a1d;-webkit-text-stroke:0.26px #161a1d;">2020-04-29</span>
<span class="t" style="left:2483.00px;top:1739.35px;font-size:28.89px;font-weight:400;color:#161a1d;-webkit-text-stroke:0.35px #161a1d;">Training: CR0000110</span>
<span class="t" style="left:2819.00px;top:1740.34px;font-size:27.92px;font-weight:400;color:#27718e;-webkit-text-stroke:0.34px #27718e;">CAS0002450</span>
<span class="t" style="left:3046.50px;top:1738.55px;font-size:29.50px;font-weight:400;color:#27718e;-webkit-text-stroke:0.35px #27718e;">Alberta Viveros</span>
<span class="t" style="left:2105.60px;top:1817.56px;font-size:30.48px;font-weight:400;color:#27718e;-webkit-text-stroke:0.37px #27718e;">Pending</span>
<div class="r" style="left:2272px;top:1817.6px;width:150px;height:32.0px;background:#edd0d2;border-radius:4px;"></div>
<span class="t" style="left:2303.00px;top:1824.14px;font-size:21.92px;font-weight:400;color:#161a1d;-webkit-text-stroke:0.26px #161a1d;">2020-04-29</span>
<span class="t" style="left:2483.00px;top:1819.47px;font-size:28.66px;font-weight:400;color:#161a1d;-webkit-text-stroke:0.34px #161a1d;">Training: CR0000106</span>
<span class="t" style="left:2819.00px;top:1820.34px;font-size:27.92px;font-weight:400;color:#27718e;-webkit-text-stroke:0.34px #27718e;">CAS0002256</span>
<span class="t" style="left:3046.50px;top:1818.55px;font-size:29.50px;font-weight:400;color:#27718e;-webkit-text-stroke:0.35px #27718e;">Alberta Viveros</span>
<svg style="left:2270px;top:1490px" width="40" height="420" viewBox="2270 1490 40 420"><circle cx="2287.8" cy="1513.6" r="6" fill="#bd4a40"/><circle cx="2287.8" cy="1593.6" r="6" fill="#bd4a40"/><circle cx="2287.8" cy="1673.6" r="6" fill="#bd4a40"/><circle cx="2287.8" cy="1753.6" r="6" fill="#bd4a40"/><circle cx="2287.8" cy="1833.6" r="6" fill="#bd4a40"/></svg></div></body></html>
